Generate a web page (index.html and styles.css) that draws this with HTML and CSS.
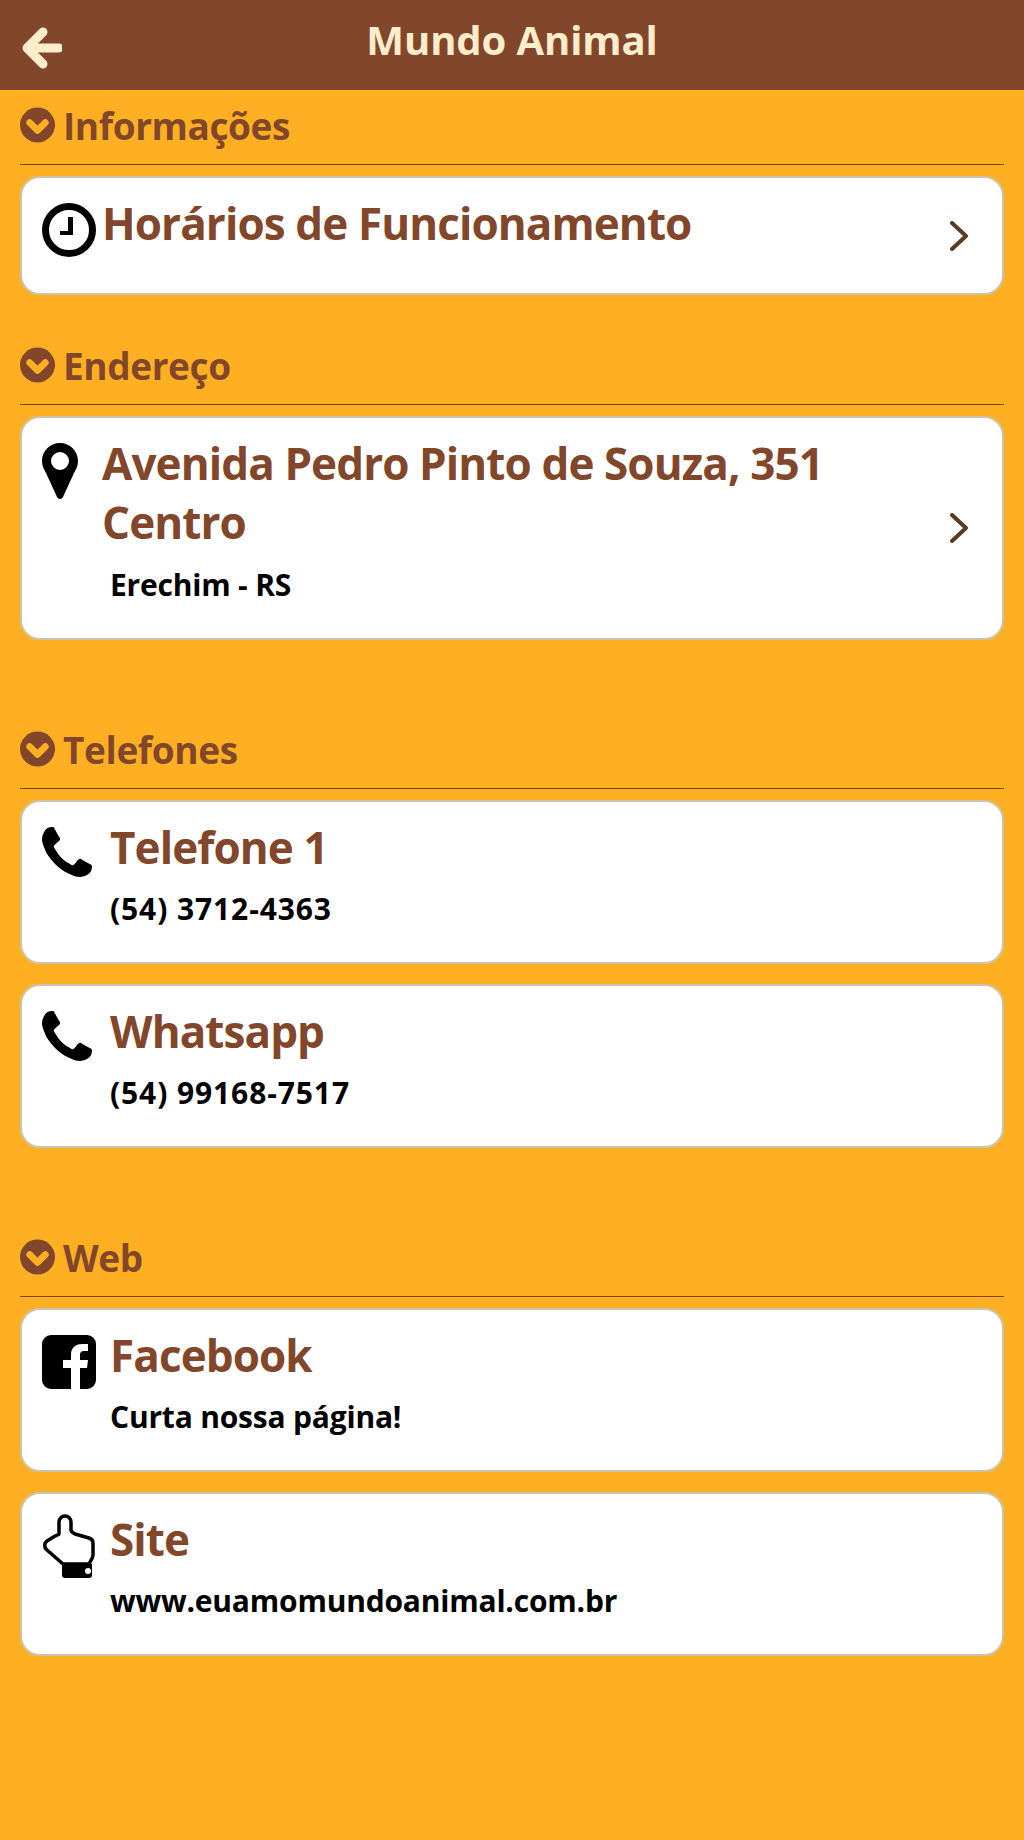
FILE: index.html
```html
<!DOCTYPE html>
<html lang="pt-BR">
<head>
    <meta charset="UTF-8">
    <meta name="viewport" content="width=device-width, initial-scale=1.0">
    <title>Mundo Animal</title>
    <link rel="stylesheet" href="styles.css">
</head>
<body>
    <header class="topbar">
        <svg class="back-icon" viewBox="0 0 40 42"><path d="M21 5 5 21l16 16M7 21h30"/></svg>
        <h1>Mundo Animal</h1>
    </header>

    <section class="group">
        <h2 class="group-title"><svg class="group-icon" viewBox="0 0 36 36"><circle cx="18" cy="18" r="18"/><path d="M10 15.500l8 8 8-8"/></svg>Informações</h2>
        <a class="card card-link">
            <svg class="card-icon" viewBox="0 0 54 54"><circle cx="27" cy="27" r="23.500" fill="none" stroke="#000" stroke-width="7"/><path d="M26 14h5v18H18v-4h8z"/></svg>
            <div class="card-text tight">
                <div class="card-title">Horários de Funcionamento</div>
            </div>
            <svg class="chevron" viewBox="0 0 18 30"><path d="M2 2l14 13L2 28"/></svg>
        </a>
    </section>

    <section class="group wide">
        <h2 class="group-title"><svg class="group-icon" viewBox="0 0 36 36"><circle cx="18" cy="18" r="18"/><path d="M10 15.500l8 8 8-8"/></svg>Endereço</h2>
        <a class="card card-link">
            <svg class="card-icon" viewBox="0 0 54 56"><path fill-rule="evenodd" d="M18 0C8 0 0 8 0 18c0 5 2 8 4 12l11 24a3.300 3.300 0 0 0 6 0l11-24c2-4 4-7 4-12C36 8 28 0 18 0zm0 9a9 9 0 1 1 0 18 9 9 0 0 1 0-18z"/></svg>
            <div class="card-text tight">
                <div class="card-title">Avenida Pedro Pinto de Souza, 351 Centro</div>
                <div class="card-sub indent">Erechim - RS</div>
            </div>
            <svg class="chevron" viewBox="0 0 18 30"><path d="M2 2l14 13L2 28"/></svg>
        </a>
    </section>

    <section class="group wide">
        <h2 class="group-title"><svg class="group-icon" viewBox="0 0 36 36"><circle cx="18" cy="18" r="18"/><path d="M10 15.500l8 8 8-8"/></svg>Telefones</h2>
        <a class="card">
            <svg class="card-icon" viewBox="0 0 54 54"><path transform="scale(.0355)" d="M1408 1112q0 27-10 70.500t-21 68.500q-21 50-122 106-94 51-186 51-27 0-53-3.500t-57.500-12.500-47-14.500-55.500-20.500-49-18q-98-35-175-83-127-79-264-216t-216-264q-48-77-83-175-3-9-18-49t-20.500-55.500-14.500-47-12.500-57.500-3.500-53q0-92 51-186 56-101 106-122 25-11 68.500-21t70.500-10q14 0 21 3 18 6 53 76 11 19 30 54t35 63.500 31 53.500q3 4 17.500 25t21.500 35.500 7 28.500q0 20-28.500 50t-62 55-62 53-28.500 46q0 9 5 22.500t8.500 20.500 14 24 11.500 19q76 137 174 235t235 174q2 1 19 11.500t24 14 20.500 8.500 22.500 5q18 0 46-28.500t53-62 55-62 50-28.500q14 0 28.500 7t35.500 21.500 25 17.500q25 15 53.500 31t63.500 35 54 30q70 35 76 53 3 7 3 21z"/></svg>
            <div class="card-text">
                <div class="card-title">Telefone 1</div>
                <div class="card-sub phone">(54) 3712-4363</div>
            </div>
        </a>
        <a class="card">
            <svg class="card-icon" viewBox="0 0 54 54"><path transform="scale(.0355)" d="M1408 1112q0 27-10 70.500t-21 68.500q-21 50-122 106-94 51-186 51-27 0-53-3.500t-57.500-12.500-47-14.500-55.500-20.500-49-18q-98-35-175-83-127-79-264-216t-216-264q-48-77-83-175-3-9-18-49t-20.500-55.500-14.500-47-12.500-57.500-3.500-53q0-92 51-186 56-101 106-122 25-11 68.500-21t70.500-10q14 0 21 3 18 6 53 76 11 19 30 54t35 63.500 31 53.500q3 4 17.500 25t21.500 35.500 7 28.500q0 20-28.500 50t-62 55-62 53-28.500 46q0 9 5 22.500t8.500 20.500 14 24 11.500 19q76 137 174 235t235 174q2 1 19 11.500t24 14 20.500 8.500 22.500 5q18 0 46-28.500t53-62 55-62 50-28.500q14 0 28.500 7t35.500 21.500 25 17.500q25 15 53.500 31t63.500 35 54 30q70 35 76 53 3 7 3 21z"/></svg>
            <div class="card-text">
                <div class="card-title">Whatsapp</div>
                <div class="card-sub phone">(54) 99168-7517</div>
            </div>
        </a>
    </section>

    <section class="group">
        <h2 class="group-title"><svg class="group-icon" viewBox="0 0 36 36"><circle cx="18" cy="18" r="18"/><path d="M10 15.500l8 8 8-8"/></svg>Web</h2>
        <a class="card">
            <svg class="card-icon" viewBox="0 0 54 54"><path fill-rule="evenodd" d="M9 0h36a9 9 0 0 1 9 9v36a9 9 0 0 1-9 9H38V33h7l1-8h-8v-5c0-2.500 1-4 4-4h4V9h-6c-7 0-11 4-11 11v5h-8v8h8v21H9a9 9 0 0 1-9-9V9a9 9 0 0 1 9-9z"/></svg>
            <div class="card-text">
                <div class="card-title">Facebook</div>
                <div class="card-sub">Curta nossa página!</div>
            </div>
        </a>
        <a class="card">
            <svg class="card-icon hand" viewBox="0 0 54 66"><path fill="none" stroke="#000" stroke-width="3.500" stroke-linejoin="round" d="M17 20V8a6 6 0 0 1 12 0v8c0 2 2 3 4 4l14 4c3 1 4 3 4 5v12c0 3-2 5-4 9H21L5 36c-3-2-3-7 0-9l8-5c2-1 4-1 4-2z"/><path fill-rule="evenodd" d="M20 50h30v11a3 3 0 0 1-3 3H23a3 3 0 0 1-3-3zm26 4a3 3 0 1 0 0 6 3 3 0 0 0 0-6z"/></svg>
            <div class="card-text">
                <div class="card-title">Site</div>
                <div class="card-sub">www.euamomundoanimal.com.br</div>
            </div>
        </a>
    </section>
</body>
</html>
```

FILE: styles.css
```css
body {
    font-family: "Open Sans", "Noto Sans", sans-serif;
    font-weight: 700;
    background-color: #ffb022;
    margin: 0;
    min-height: 1840px;
}
.topbar {
    height: 90px;
    background-color: #82472a;
    display: flex;
    align-items: flex-start;
    justify-content: center;
    position: relative;
}
.topbar h1 {
    margin: 0;
    font-size: 40px;
    line-height: 80px;
    letter-spacing: -0.1px;
    color: #fdedcc;
}
.back-icon {
    position: absolute;
    left: 22px;
    top: 27px;
    width: 40px;
    height: 42px;
}
.back-icon path {
    fill: none;
    stroke: #fdedcc;
    stroke-width: 9;
    stroke-linecap: round;
    stroke-linejoin: round;
}
.group {
    margin: 0 20px 35px;
}
.group.wide {
    margin-bottom: 74px;
}
.group-title {
    height: 75px;
    box-sizing: border-box;
    margin: 0 0 11px;
    padding-top: 17px;
    border-bottom: 1.500px solid #7d4410;
    display: flex;
    align-items: flex-start;
    gap: 8px;
    font-size: 37px;
    line-height: 38px;
    letter-spacing: -0.4px;
    color: #82472a;
}
.group-icon {
    width: 35px;
    height: 36px;
    flex-shrink: 0;
}
.group-icon circle {
    fill: #82472a;
}
.group-icon path {
    fill: none;
    stroke: #ffb022;
    stroke-width: 7;
    stroke-linecap: round;
    stroke-linejoin: round;
}
.card {
    display: flex;
    align-items: flex-start;
    box-sizing: border-box;
    min-height: 164px;
    margin-bottom: 20px;
    padding: 0 20px;
    background-color: #fff;
    border: 2px solid #cdc4b0;
    border-radius: 20px;
}
.card:last-child {
    margin-bottom: 0;
}
.card-link {
    min-height: 119px;
}
.card-icon {
    width: 54px;
    flex-shrink: 0;
    margin: 25px 14px 0 0;
}
.card-icon.hand {
    margin-top: 20px;
}
.card-text {
    flex: 1;
    margin-top: 16px;
    padding-bottom: 35px;
}
.card-text.tight {
    margin-left: -8px;
}
.card-title {
    font-size: 44px;
    line-height: 59px;
    letter-spacing: -0.9px;
    color: #82472a;
}
.card-sub {
    font-size: 30px;
    line-height: 36px;
    margin-top: 14px;
    letter-spacing: -0.2px;
    color: #000;
}
.card-sub.phone {
    letter-spacing: 0.9px;
}
.card-sub.indent {
    margin-left: 8px;
    margin-top: 15px;
}
.chevron {
    width: 18px;
    height: 30px;
    align-self: center;
    margin: 0 14px 0 20px;
    flex-shrink: 0;
}
.chevron path {
    fill: none;
    stroke: #5a3a25;
    stroke-width: 4;
    stroke-linecap: round;
    stroke-linejoin: round;
}
```
